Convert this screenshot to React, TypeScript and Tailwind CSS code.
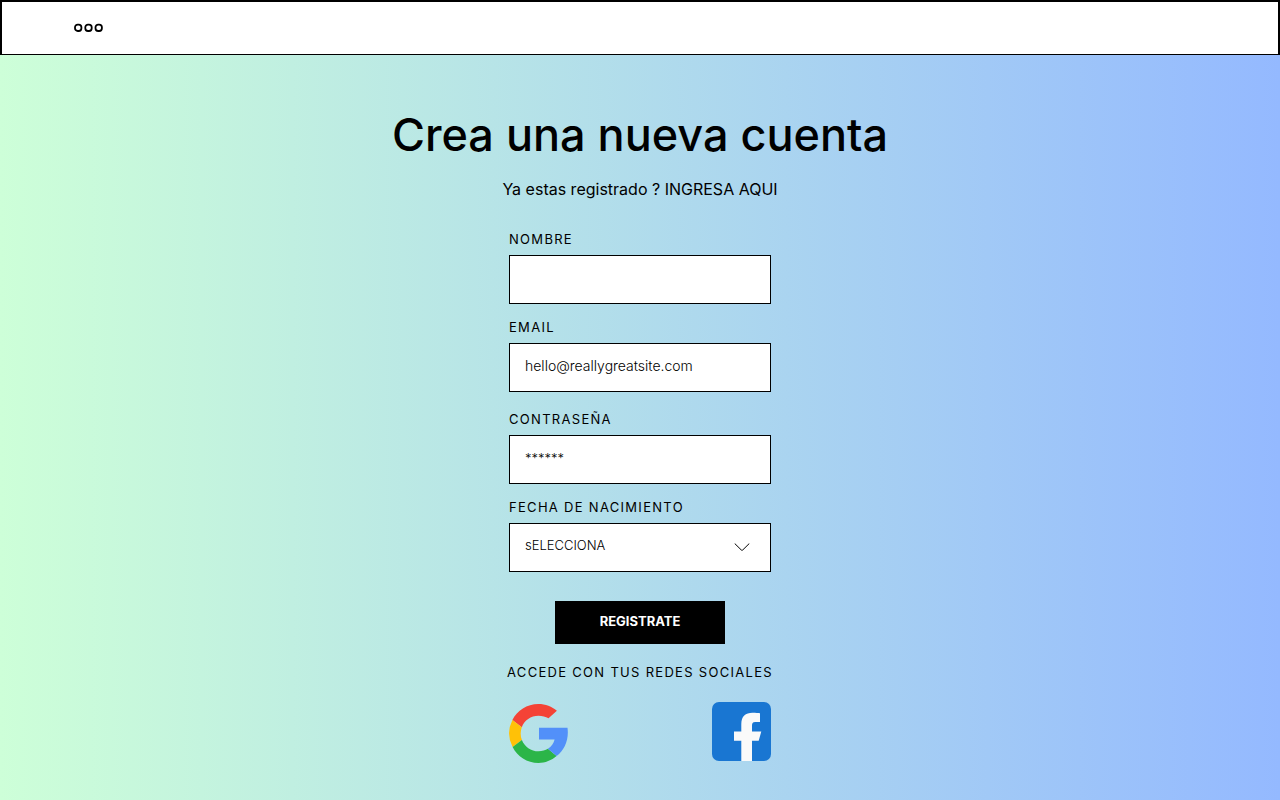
import type { ReactNode } from "react";

const controlClass =
  "block h-[49px] w-full appearance-none rounded-none border border-black bg-white px-[15px] pb-1 font-light text-black placeholder:text-black placeholder:opacity-100";

function Field({ id, label, children }: { id: string; label: string; children: ReactNode }) {
  return (
    <div>
      <label htmlFor={id} className="mb-1.5 block text-[13px] leading-5 tracking-widest">
        {label}
      </label>
      {children}
    </div>
  );
}

function GoogleLogo() {
  return (
    <svg viewBox="0 0 59 59" className="block size-[59px]" aria-hidden="true">
      <path fill="#F44336" d="M3.4 16C8.2 6.4 18 0 29.300 0c7.200 0 13.600 2.500 18.600 6.700L39.500 14.300C36.700 12.600 33.200 11.700 29.500 11.700c-7.600 0-14.200 4.700-16.700 11.500Z" />
      <path fill="#FFC107" d="M3.400 16l9.400 7.200a18 18 0 0 0 .1 12.700L3.600 43A29.500 29.500 0 0 1 3.400 16Z" />
      <path fill="#2BB548" d="M3.600 43l9.300-7.100c2.600 6.700 9 11.400 16.600 11.400 3.700 0 6.900-.9 9.400-2.500l8.700 7.300C42.600 56.500 36.200 59 29.500 59 18 59 8.400 52.500 3.600 43Z" />
      <path fill="#5290F9" d="M30 23.700h28.500c1.600 11.800-2.700 22-10.900 28.400l-8.700-7.300c3.500-2.300 5.800-5.600 6.700-9.300H30Z" />
    </svg>
  );
}

function FacebookLogo() {
  return (
    <svg viewBox="0 0 59 59" className="block size-[59px]" aria-hidden="true">
      <rect width="59" height="59" rx="7" fill="#1976D2" />
      <path fill="#FAFAFA" d="M29.300 59V38.700H22v-9.200h7.300v-7.300c0-8 4.200-11.500 11.200-11.500 3.300 0 6 .2 7.500.5v8.700h-4.800c-2.700 0-3.200 1.300-3.200 4v5.600h9.300l-2.600 9.200H40V59Z" />
    </svg>
  );
}

export default function App() {
  return (
    <div className="flex min-h-screen flex-col bg-linear-to-r/srgb from-[#cdffd8] to-[#94b9ff] font-['Inter','Liberation_Sans',sans-serif] text-black">
      <header className="flex h-[55px] items-center border-2 border-b border-black bg-white px-[72px]">
        <button type="button" aria-label="Menú">
          <svg viewBox="0 0 30 10" className="block h-[10px] w-[30px]" fill="none" stroke="#000" strokeWidth="1.8">
            <rect x="1" y="1.600" width="6.400" height="6.400" rx="2.700" />
            <rect x="11.300" y="1.600" width="6.400" height="6.400" rx="2.700" />
            <rect x="21.500" y="1.600" width="6.400" height="6.400" rx="2.700" />
          </svg>
        </button>
      </header>

      <main className="flex flex-col items-center px-4 pt-[50px] pb-9">
        <h1 className="text-center text-[45px] leading-[60px] font-medium">Crea una nueva cuenta</h1>
        <p className="mt-3 text-center text-base leading-6">
          Ya estas registrado ? <a href="#ingresa">INGRESA AQUI</a>
        </p>

        <form className="mt-7 flex w-full max-w-[262px] flex-col" onSubmit={(event) => event.preventDefault()}>
          <div className="flex flex-col gap-[13px]">
            <Field id="nombre" label="NOMBRE">
              <input id="nombre" type="text" autoComplete="name" className={`${controlClass} text-sm`} />
            </Field>
            <Field id="email" label="EMAIL">
              <input id="email" type="email" placeholder="hello@reallygreatsite.com" className={`${controlClass} text-sm`} />
            </Field>
          </div>
          <div className="mt-[17px] flex flex-col gap-[13px]">
            <Field id="contrasena" label="CONTRASEÑA">
              <input id="contrasena" type="password" placeholder="******" className={`${controlClass} text-[13px]`} />
            </Field>
            <Field id="fecha" label="FECHA DE NACIMIENTO">
              <div className="relative">
                <select id="fecha" className={`${controlClass} text-[13px]`}>
                  <option>sELECCIONA</option>
                </select>
                <svg
                  viewBox="0 0 16 8"
                  className="pointer-events-none absolute top-5 right-[21px] h-2 w-4"
                  fill="none"
                  stroke="#000"
                  strokeLinecap="round"
                  strokeLinejoin="round"
                  aria-hidden="true"
                >
                  <path d="M1 .8 7.300 7Q8 7.600 8.700 7L15 .8" />
                </svg>
              </div>
            </Field>
          </div>
          <button type="submit" className="mt-[29px] h-[43px] w-[170px] self-center bg-black pb-0.5 text-[13px] font-bold text-white">
            REGISTRATE
          </button>
        </form>

        <p className="mt-[18px] text-center text-[13px] leading-5 tracking-widest">ACCEDE CON TUS REDES SOCIALES</p>
        <div className="mt-5 flex w-full max-w-[262px] items-start justify-between">
          <a href="#google" aria-label="Google" className="pt-0.5">
            <GoogleLogo />
          </a>
          <a href="#facebook" aria-label="Facebook">
            <FacebookLogo />
          </a>
        </div>
      </main>
    </div>
  );
}
